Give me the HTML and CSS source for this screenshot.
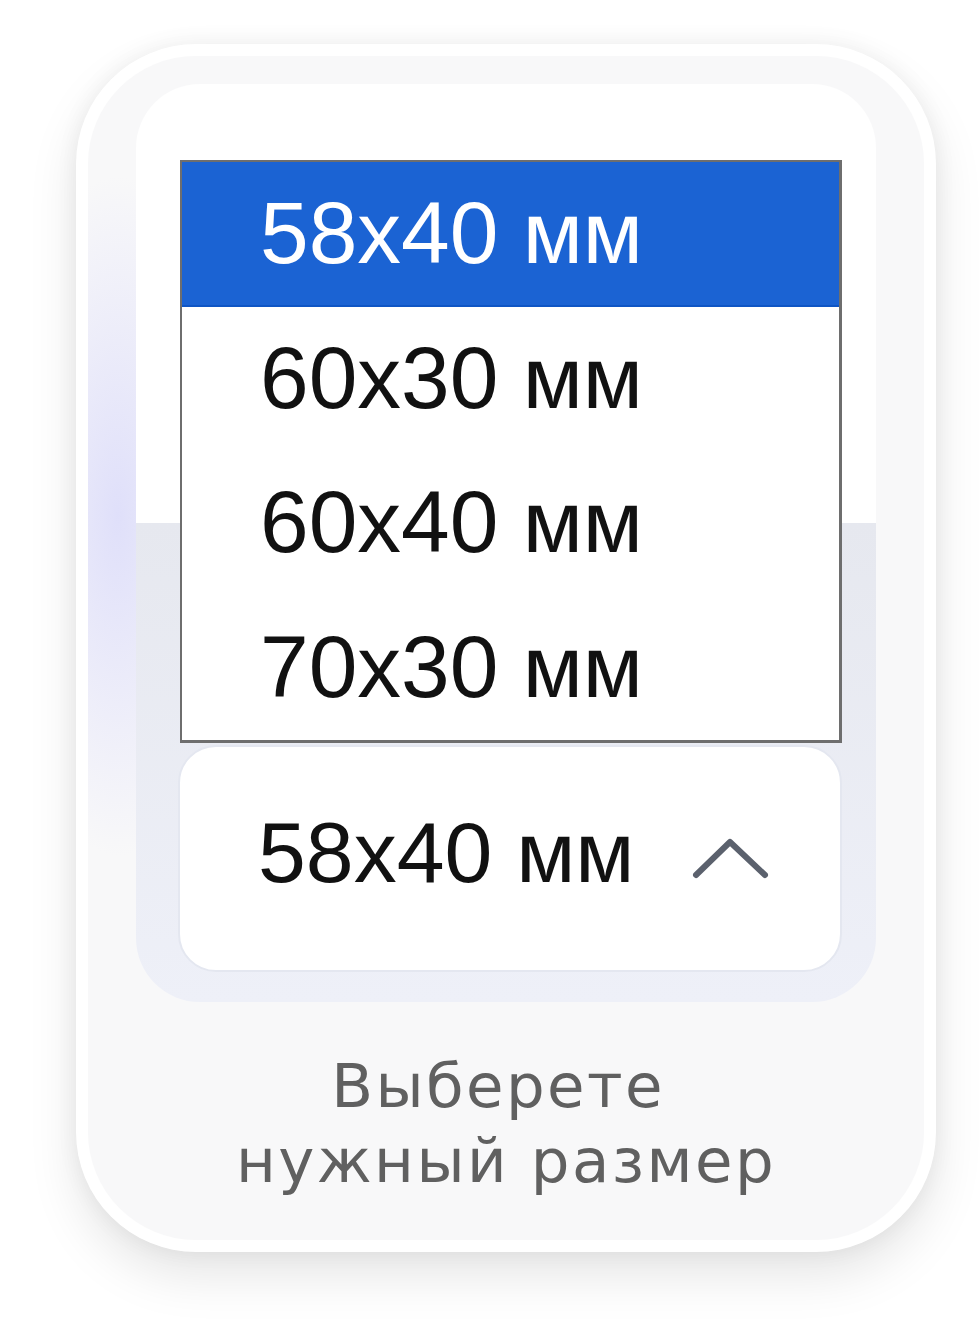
FILE: index.html
```html
<!DOCTYPE html>
<html lang="ru">
<head>
<meta charset="utf-8">
<title>Выберете нужный размер</title>
<link rel="stylesheet" href="styles.css">
</head>
<body>
<div class="card">
  <div class="card-inner">
    <div class="shot">
      <ul class="list">
        <li class="opt selected">58x40 мм</li>
        <li class="opt">60x30 мм</li>
        <li class="opt">60x40 мм</li>
        <li class="opt">70x30 мм</li>
      </ul>
      <div class="select">
        <span class="select-value">58x40 мм</span>
        <svg class="chevron" width="80" height="46" viewBox="0 0 80 46">
          <polyline points="5,40 39,7 74,40" fill="none" stroke="#5b616d" stroke-width="6" stroke-linecap="round" stroke-linejoin="round"/>
        </svg>
      </div>
    </div>
    <p class="caption"><span class="cap-line cap-first">Выберете</span><span class="cap-line">нужный размер</span></p>
  </div>
</div>
</body>
</html>
```

FILE: styles.css
```css
html, body {
  margin: 0;
  padding: 0;
  background: #ffffff;
}
body {
  width: 980px;
  height: 1328px;
  overflow: hidden;
}
.card {
  box-sizing: border-box;
  margin: 44px 0 0 76px;
  width: 860px;
  height: 1208px;
  padding: 12px;
  background: #ffffff;
  border-radius: 120px;
  box-shadow: 0 24px 50px rgba(0, 0, 0, 0.10), 0 0 22px rgba(0, 0, 0, 0.06);
}
.card-inner {
  box-sizing: border-box;
  height: 100%;
  border-radius: 108px;
  padding: 28px 48px 0 48px;
  background:
    radial-gradient(ellipse 120px 340px at 30px 460px, rgba(222, 222, 250, 0.95), rgba(222, 222, 250, 0) 100%),
    #f8f8f9;
  display: flex;
  flex-direction: column;
}
.shot {
  box-sizing: border-box;
  height: 918px;
  flex-shrink: 0;
  border-radius: 64px;
  background: linear-gradient(to bottom, #ffffff 0, #ffffff 439px, #e6e8ef 439px, #eef0f8 100%);
  padding: 76px 34px 0 42px;
  display: flex;
  flex-direction: column;
}
.list {
  list-style: none;
  margin: 0 0 2px 2px;
  padding: 0;
  border: 2px solid #6e6e6e;
  border-right-width: 3px;
  border-bottom-width: 3px;
  background: #ffffff;
}
.opt {
  box-sizing: border-box;
  height: 144.5px;
  padding-left: 78px;
  font-family: "Liberation Sans", Arial, sans-serif;
  font-size: 87.5px;
  line-height: 142px;
  color: #111111;
}
.opt.selected {
  background: #1b63d3;
  color: #ffffff;
  border-bottom: 2px solid #0f55c4;
}
.select {
  box-sizing: border-box;
  height: 227px;
  background: #ffffff;
  border: 2px solid #e4e7f0;
  border-radius: 38px;
  padding: 62px 0 0 78px;
  display: flex;
  align-items: flex-start;
  gap: 57px;
}
.select-value {
  font-family: "Liberation Sans", Arial, sans-serif;
  font-size: 86px;
  color: #111111;
  line-height: 1;
}
.chevron {
  display: block;
  margin-top: 26px;
}
.caption {
  margin: 46px 0 0 0;
  display: flex;
  flex-direction: column;
  align-items: center;
  font-family: "DejaVu Sans", "Open Sans", sans-serif;
  font-size: 61px;
  line-height: 75px;
  letter-spacing: 2.4px;
  color: #606060;
}
.cap-line {
  display: block;
  height: 75px;
  white-space: nowrap;
}
.cap-first {
  padding-right: 16px;
}
```
